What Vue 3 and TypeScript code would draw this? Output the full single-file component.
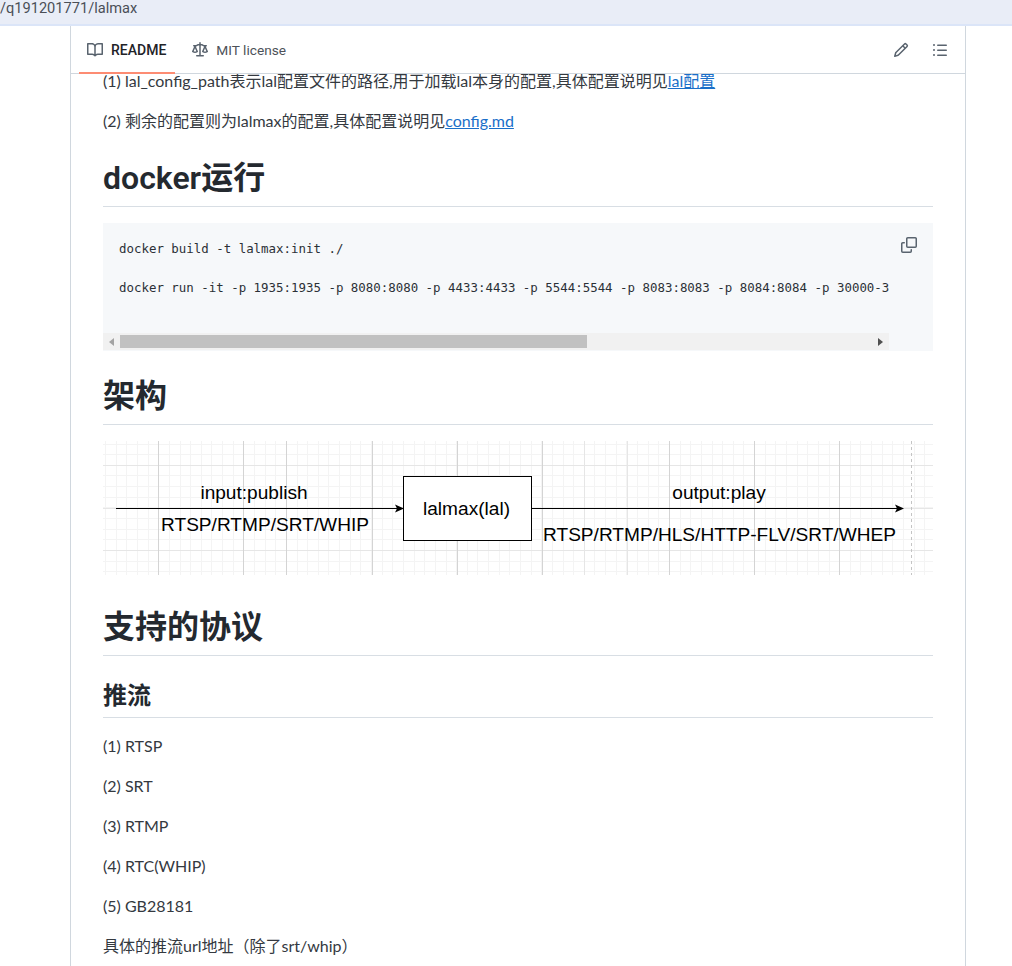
<script setup lang="ts">
const W = 830
const H = 134
const minor = 10.64
const count = (max: number, step: number) => Math.floor(max / step) + 1
const minorV = Array.from({ length: count(W, minor) }, (_, i) => +(2.5 + i * minor).toFixed(1))
const minorH = Array.from({ length: count(H, minor) }, (_, i) => +(3 + i * minor).toFixed(1))
const midV = [481.5, 524]
const strongV = [55, 140, 183.5, 269, 354, 439, 566.5, 651, 736]
const midH = [24.6, 67.1, 109.6]
const pushList = ['(1) RTSP', '(2) SRT', '(3) RTMP', '(4) RTC(WHIP)', '(5) GB28181']
</script>

<template>
  <div class="page">
    <div class="addr">/q191201771/lalmax</div>
    <div class="card">
      <div class="tabs">
        <div class="tab active">
          <svg viewBox="0 0 16 16" class="ic"><path d="M0 1.75A.75.75 0 0 1 .75 1h4.253c1.227 0 2.317.59 3 1.501A3.743 3.743 0 0 1 11.006 1h4.245a.75.75 0 0 1 .75.75v10.5a.75.75 0 0 1-.75.75h-4.507a2.25 2.25 0 0 0-1.591.659l-.622.621a.75.75 0 0 1-1.06 0l-.622-.621A2.25 2.25 0 0 0 5.258 13H.75a.75.75 0 0 1-.75-.75Zm7.251 10.324.004-5.073-.002-2.253A2.25 2.25 0 0 0 5.003 2.5H1.5v9h3.757a3.75 3.75 0 0 1 1.994.574ZM8.755 4.75l-.004 7.322a3.752 3.752 0 0 1 1.992-.572H14.5v-9h-3.495a2.25 2.25 0 0 0-2.25 2.25Z" /></svg>
          <span>README</span>
        </div>
        <div class="tab">
          <svg viewBox="0 0 16 16" class="ic"><path d="M8.75.75V2h.985c.304 0 .603.08.867.231l1.29.736c.038.022.08.033.124.033h2.234a.75.75 0 0 1 0 1.5h-.427l2.111 4.692a.75.75 0 0 1-.154.838l-.53-.53.529.531-.001.002-.002.002-.006.006-.006.005-.01.01-.045.04c-.21.176-.441.327-.686.45C14.556 10.78 13.88 11 13 11a4.498 4.498 0 0 1-2.023-.454 3.544 3.544 0 0 1-.686-.45l-.045-.04-.016-.015-.006-.006-.004-.004v-.001a.75.75 0 0 1-.154-.838L12.178 4.5h-.162c-.305 0-.604-.079-.868-.231l-1.29-.736a.245.245 0 0 0-.124-.033H8.75V13h2.5a.75.75 0 0 1 0 1.5h-6.5a.75.75 0 0 1 0-1.5h2.5V3.5h-.984a.245.245 0 0 0-.124.033l-1.289.737c-.265.15-.564.23-.869.23h-.162l2.112 4.692a.75.75 0 0 1-.154.838l-.53-.53.529.531-.001.002-.002.002-.006.006-.016.015-.045.04c-.21.176-.441.327-.686.45C4.556 10.78 3.88 11 3 11a4.498 4.498 0 0 1-2.023-.454 3.544 3.544 0 0 1-.686-.45l-.045-.04-.016-.015-.006-.006-.004-.004v-.001a.75.75 0 0 1-.154-.838L2.178 4.5H1.75a.75.75 0 0 1 0-1.5h2.234a.249.249 0 0 0 .125-.033l1.288-.737c.265-.15.564-.23.869-.23h.984V.75a.75.75 0 0 1 1.5 0Zm2.945 8.477c.285.135.718.273 1.305.273s1.02-.138 1.305-.273L13 6.327Zm-10 0c.285.135.718.273 1.305.273s1.02-.138 1.305-.273L3 6.327Z" /></svg>
          <span>MIT license</span>
        </div>
        <div class="tools">
          <svg viewBox="0 0 16 16" class="ic"><path d="M11.013 1.427a1.75 1.75 0 0 1 2.474 0l1.086 1.086a1.75 1.75 0 0 1 0 2.474l-8.61 8.61c-.21.21-.47.364-.756.445l-3.251.93a.75.75 0 0 1-.927-.928l.929-3.25c.081-.286.235-.547.445-.758l8.61-8.61Zm.176 4.823L9.75 4.81l-6.286 6.287a.253.253 0 0 0-.064.108l-.558 1.953 1.953-.558a.253.253 0 0 0 .108-.064Zm1.238-3.763a.25.25 0 0 0-.354 0L10.811 3.75l1.439 1.44 1.263-1.263a.25.25 0 0 0 0-.354Z" /></svg>
          <svg viewBox="0 0 16 16" class="ic"><path d="M5.75 2.5h8.5a.75.75 0 0 1 0 1.5h-8.5a.75.75 0 0 1 0-1.5Zm0 5h8.5a.75.75 0 0 1 0 1.5h-8.5a.75.75 0 0 1 0-1.5Zm0 5h8.5a.75.75 0 0 1 0 1.5h-8.5a.75.75 0 0 1 0-1.5ZM2 14a1 1 0 1 1 0-2 1 1 0 0 1 0 2Zm1-6a1 1 0 1 1-2 0 1 1 0 0 1 2 0ZM2 4a1 1 0 1 1 0-2 1 1 0 0 1 0 2Z" /></svg>
        </div>
      </div>

      <article class="md">
        <p class="first">(1) lal_config_path表示lal配置文件的路径,用于加载lal本身的配置,具体配置说明见<a>lal配置</a></p>
        <p>(2) 剩余的配置则为lalmax的配置,具体配置说明见<a>config.md</a></p>

        <h1>docker运行</h1>
        <div class="code">
          <div class="code-main">
            <pre>docker build -t lalmax:init ./

docker run -it -p 1935:1935 -p 8080:8080 -p 4433:4433 -p 5544:5544 -p 8083:8083 -p 8084:8084 -p 30000-30100:30000-30100/udp lalmax:init
</pre>
            <div class="sb">
              <span class="arr left"></span>
              <span class="thumb"></span>
              <span class="arr right"></span>
            </div>
          </div>
          <svg viewBox="0 0 16 16" class="copy"><path d="M0 6.75C0 5.784.784 5 1.75 5h1.5a.75.75 0 0 1 0 1.5h-1.5a.25.25 0 0 0-.25.25v7.5c0 .138.112.25.25.25h7.5a.25.25 0 0 0 .25-.25v-1.5a.75.75 0 0 1 1.5 0v1.5A1.75 1.75 0 0 1 9.25 16h-7.5A1.75 1.75 0 0 1 0 14.25Z" /><path d="M5 1.75C5 .784 5.784 0 6.75 0h7.5C15.216 0 16 .784 16 1.75v7.5A1.75 1.75 0 0 1 14.25 11h-7.5A1.75 1.75 0 0 1 5 9.25Zm1.75-.25a.25.25 0 0 0-.25.25v7.5c0 .138.112.25.25.25h7.5a.25.25 0 0 0 .25-.25v-7.5a.25.25 0 0 0-.25-.25Z" /></svg>
        </div>

        <h1>架构</h1>
        <p class="fig">
          <svg :viewBox="`0 0 ${W} ${H}`" class="diagram">
            <g stroke="#f4f4f4" stroke-width="1" shape-rendering="crispEdges">
              <line v-for="x in minorV" :key="'a' + x" :x1="x" :x2="x" y1="0" :y2="H" />
              <line v-for="y in minorH" :key="'b' + y" x1="0" :x2="W" :y1="y" :y2="y" />
            </g>
            <g stroke="#e6e6e6" stroke-width="1" shape-rendering="crispEdges">
              <line v-for="x in midV" :key="'c' + x" :x1="x" :x2="x" y1="0" :y2="H" />
              <line v-for="y in midH" :key="'d' + y" x1="0" :x2="W" :y1="y" :y2="y" />
            </g>
            <g stroke="#d4d4d4" stroke-width="1" shape-rendering="crispEdges">
              <line v-for="x in strongV" :key="'e' + x" :x1="x" :x2="x" y1="0" :y2="H" />
            </g>
            <line x1="808.5" x2="808.5" y1="0" :y2="H" stroke="#c4c4c4" stroke-dasharray="3 3" />
            <line x1="13" x2="294" y1="67.5" y2="67.5" stroke="#000" />
            <path d="M301 67.5 L292 63.5 L294 67.5 L292 71.5 Z" />
            <rect x="300.5" y="35.5" width="128" height="64" fill="#fff" stroke="#000" />
            <line x1="429" x2="794" y1="67.5" y2="67.5" stroke="#000" />
            <path d="M801 67.5 L792 63.5 L794 67.5 L792 71.5 Z" />
            <g class="dt" text-anchor="middle">
              <text x="151" y="57.5">input:publish</text>
              <text x="162" y="90">RTSP/RTMP/SRT/WHIP</text>
              <text x="363.5" y="74">lalmax(lal)</text>
              <text x="616" y="57.5">output:play</text>
              <text x="616.5" y="100">RTSP/RTMP/HLS/HTTP-FLV/SRT/WHEP</text>
            </g>
          </svg>
        </p>

        <h1>支持的协议</h1>
        <h2>推流</h2>
        <p v-for="item in pushList" :key="item">{{ item }}</p>
        <p>具体的推流url地址（除了srt/whip）</p>
      </article>
    </div>
  </div>
</template>

<style>
html, body { margin: 0; background: #fff; overflow: hidden; }
</style>

<style scoped>
.page {
  width: 1012px;
  height: 966px;
  overflow: hidden;
  font-family: Roboto, "Noto Sans CJK SC", sans-serif;
  color: #24292f;
}
.addr {
  height: 24px;
  line-height: 17px;
  font-size: 14.6px;
  background: #e9edf7;
  border-bottom: 2px solid #dbe5f8;
  color: #4a4f57;
  white-space: nowrap;
}
.card {
  margin-left: 70px;
  width: 894px;
  height: 940px;
  border-left: 1px solid #d0d7de;
  border-right: 1px solid #d0d7de;
  overflow: hidden;
}
.tabs {
  height: 47px;
  display: flex;
  align-items: center;
  padding-left: 16px;
  gap: 26px;
  border-bottom: 1px solid #d0d7de;
  position: relative;
  font-size: 13.7px;
}
.tab {
  display: flex;
  align-items: center;
  gap: 8px;
  color: #4d5259;
  position: relative;
  height: 47px;
}
.tab.active {
  font-size: 14px;
  font-weight: 500;
  color: #1f2328;
}
.tab.active::after {
  content: "";
  position: absolute;
  left: -8px;
  width: 96px;
  bottom: -1px;
  height: 2px;
  background: #fd8c73;
}
.ic {
  width: 16px;
  height: 16px;
  fill: #59636e;
  flex: none;
}
.tools {
  margin-left: auto;
  margin-right: 17px;
  display: flex;
  gap: 23px;
}
.md {
  padding: 0 32px;
  font-family: Lato, "Noto Sans CJK SC", sans-serif;
  font-size: 16px;
  line-height: 24px;
  color: #34393f;
}
p {
  margin: 0 0 16px;
  white-space: nowrap;
}
p.first {
  margin-top: -5px;
}
a {
  color: #1a6fc9;
  text-decoration: underline;
}
h1 {
  font-family: Roboto, "Noto Sans CJK SC", sans-serif;
  font-size: 32px;
  line-height: 40px;
  font-weight: 600;
  margin: 24px 0 16px;
  padding-top: 1px;
  padding-bottom: 8px;
  border-bottom: 1px solid #d8dee4;
  color: #24292f;
}
h2 {
  font-family: Roboto, "Noto Sans CJK SC", sans-serif;
  font-size: 24px;
  line-height: 30px;
  font-weight: 600;
  margin: 24px 0 16px;
  padding-top: 1px;
  padding-bottom: 6px;
  border-bottom: 1px solid #d8dee4;
  color: #24292f;
}
.code {
  position: relative;
  height: 128px;
  background: #f6f8fa;
  margin-bottom: 16px;
}
.code-main {
  width: 786px;
  height: 128px;
  display: flex;
  flex-direction: column;
  overflow: hidden;
}
pre {
  flex: 1;
  margin: 0;
  padding: 16px;
  overflow: hidden;
  font-family: "DejaVu Sans Mono", "Liberation Mono", monospace;
  font-size: 12.43px;
  line-height: 19.4px;
  color: #2b3036;
}
.sb {
  height: 17px;
  background: #f1f1f1;
  display: flex;
  align-items: center;
  margin-bottom: 1px;
}
.thumb {
  width: 467px;
  height: 13px;
  background: #c1c1c1;
  margin-left: 6px;
}
.arr {
  width: 0;
  height: 0;
  border-top: 4px solid transparent;
  border-bottom: 4px solid transparent;
}
.arr.left {
  margin-left: 6px;
  border-right: 5px solid #a3a3a3;
}
.arr.right {
  margin-left: auto;
  margin-right: 6px;
  border-left: 5px solid #505050;
}
.copy {
  position: absolute;
  top: 14px;
  right: 16px;
  width: 16px;
  height: 16px;
  fill: #59636e;
}
.fig {
  height: 141px;
  margin-bottom: 16px;
}
.diagram {
  display: block;
  width: 830px;
  height: 134px;
}
.dt text {
  font-family: "Liberation Sans", sans-serif;
  font-size: 19.1px;
  fill: #000;
}
</style>
